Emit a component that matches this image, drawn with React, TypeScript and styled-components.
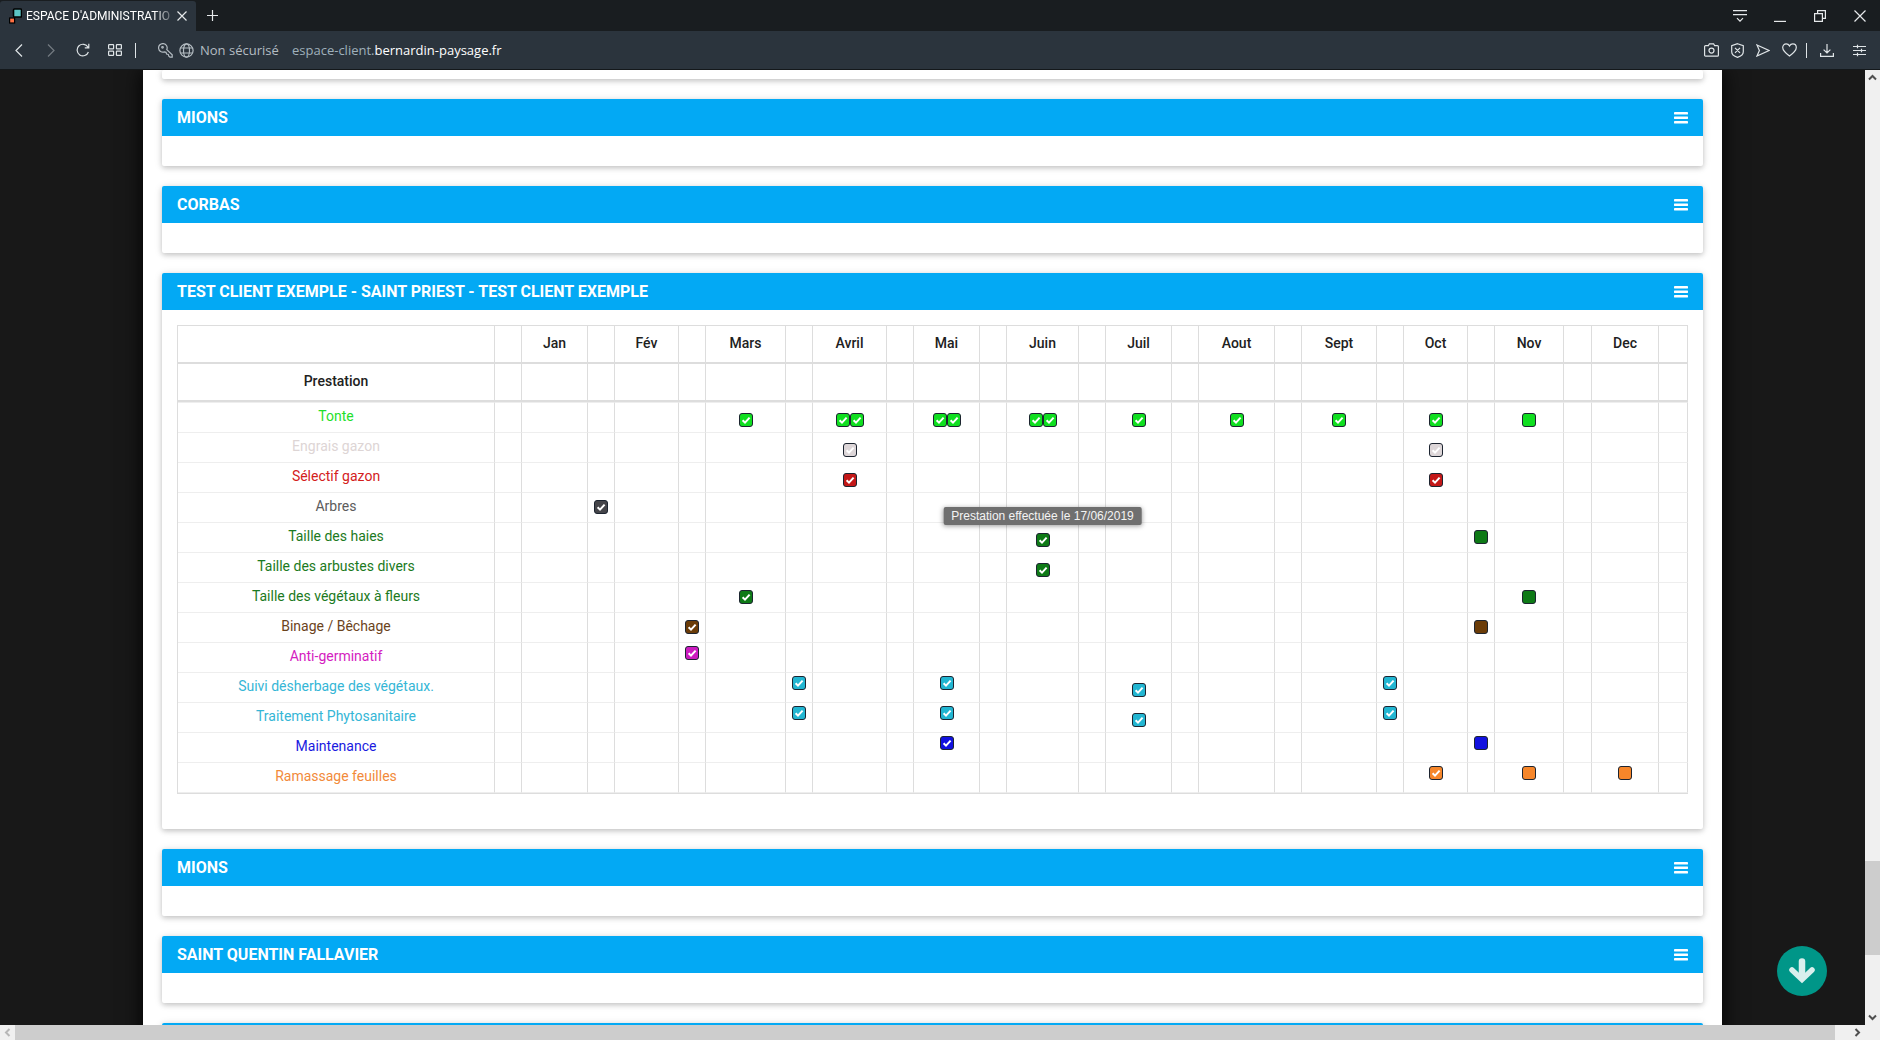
import React, { useState } from "react";
import styled, { createGlobalStyle } from "styled-components";

const Global = createGlobalStyle`
  *, *::before, *::after { box-sizing: border-box; }
  html, body { margin: 0; }
  body { background: #181818; overflow: hidden; font-family: Roboto, "Liberation Sans", sans-serif; }
  button { font: inherit; color: inherit; background: none; border: 0; padding: 0; cursor: pointer; }
`;

/* ---------- Browser window ---------- */

const Window = styled.div`
  display: flex;
  flex-direction: column;
  height: 100vh;
`;

const TitleBar = styled.header`
  display: flex;
  height: 31px;
  flex: none;
  background: #191d20;
  color: #e6e9eb;
`;

const Tab = styled.div`
  display: flex;
  align-items: center;
  width: 196px;
  margin-top: 1px;
  padding: 0 8px 0 9px;
  gap: 4px;
  background: #2b343d;
  border-radius: 3px 3px 0 0;
`;

const TabTitle = styled.span`
  flex: 1;
  white-space: nowrap;
  font-size: 12px;
  line-height: 16px;
  color: #fff;
  mask-image: linear-gradient(to right, #000 88%, rgba(0, 0, 0, 0.2));
`;

const IconButton = styled.button<{ $w: number; $dim?: boolean }>`
  display: flex;
  align-items: center;
  justify-content: center;
  flex: none;
  width: ${(p) => p.$w}px;
  height: 100%;
  opacity: ${(p) => (p.$dim ? 0.4 : 1)};
`;

const Spacer = styled.div`
  flex: 1;
`;

const AddressBar = styled.nav`
  display: flex;
  align-items: center;
  flex: none;
  height: 39px;
  padding: 0 5px 0 3px;
  background: #2b343d;
  border-bottom: 1px solid #14181b;
  color: #dfe4e7;
  font-family: "Open Sans", "Noto Sans", sans-serif;
  font-size: 13px;
  line-height: 18px;
`;

const Divider = styled.span`
  width: 1px;
  height: 15px;
  margin: 0 4px;
  background: #dfe4e7;
`;

const Site = styled.div`
  display: flex;
  align-items: center;
  gap: 6px;
  width: 134px;
  margin-left: 18px;
  color: #b4bcc2;
  white-space: nowrap;
`;

const Url = styled.button`
  color: #9fb0bb;
  white-space: nowrap;
  b { font-weight: 500; color: #fff; }
`;

const Line = styled.svg`
  display: block;
  flex: none;
  fill: none;
  stroke: currentColor;
  stroke-width: 1.2;
`;

/* ---------- Viewport and scroll bars ---------- */

const Viewport = styled.div`
  display: grid;
  grid-template-columns: minmax(0, 1fr) 15px;
  grid-template-rows: minmax(0, 1fr) 15px;
  flex: 1;
  min-height: 0;
`;

const Scene = styled.div`
  position: relative;
  overflow: hidden;
`;

const Track = styled.div<{ $vertical?: boolean }>`
  display: flex;
  flex-direction: ${(p) => (p.$vertical ? "column" : "row")};
  grid-column: ${(p) => (p.$vertical ? "auto" : "1 / -1")};
  background: #f0f0f0;
  color: #505050;
`;

const TrackButton = styled.button<{ $faint?: boolean }>`
  display: flex;
  align-items: center;
  justify-content: center;
  flex: none;
  width: 15px;
  height: 15px;
  opacity: ${(p) => (p.$faint ? 0.35 : 1)};
`;

const Thumb = styled.div<{ $grow: number }>`
  flex: ${(p) => p.$grow} 0 0;
  background: #cdcdcd;
`;

const Gap = styled.div<{ $grow: number }>`
  flex: ${(p) => p.$grow} 0 0;
`;

/* ---------- Site page ---------- */

const Page = styled.main`
  display: flex;
  flex-direction: column;
  gap: 20px;
  min-height: 100%;
  margin: 0 143px;
  padding: 0 19px;
  background: #fff;
  box-shadow: 0 0 20px #000;
`;

const Card = styled.section`
  flex: none;
  border-radius: 2px;
  background: #fff;
  box-shadow: 0 2px 5px rgba(0, 0, 0, 0.16), 0 1px 8px rgba(0, 0, 0, 0.12);
`;

const CardHead = styled.div`
  display: flex;
  align-items: center;
  justify-content: space-between;
  height: 37px;
  padding: 0 15px;
  border-radius: 2px 2px 0 0;
  background: #03a9f4;
  color: #fff;
`;

const CardTitle = styled.h2`
  margin: 0;
  font-size: 16px;
  line-height: 20px;
  font-weight: 700;
`;

const CardMenu = styled.button`
  display: flex;
`;

const CardBody = styled.div<{ $size: "cut" | "empty" | "full" }>`
  padding: ${(p) => (p.$size === "full" ? "15px 15px 35px" : "0")};
  height: ${(p) => ({ cut: "9px", empty: "30px", full: "auto" })[p.$size]};
`;

const Schedule = styled.table`
  width: 100%;
  table-layout: fixed;
  border-collapse: separate;
  border-spacing: 0;
  border: solid #ddd;
  border-width: 1px 0 1px 1px;
  font-size: 14px;
  line-height: 20px;

  tbody tr:first-child > * { border-top: 1px solid #eee; height: 31px; }
`;

const Head = styled.th`
  height: 38px;
  padding: 0 0 2px;
  border-right: 1px solid #ddd;
  border-bottom: 2px solid #ddd;
  font-weight: 500;
  color: #212121;
`;

const Service = styled.th<{ $color: string }>`
  height: 30px;
  padding: 0 0 3px;
  border-right: 1px solid #ddd;
  border-bottom: 1px solid #eee;
  font-weight: 400;
  color: ${(p) => p.$color};
`;

const Cell = styled.td<{ $align: Align }>`
  height: 30px;
  padding: 3px 0 5px;
  border-right: 1px solid #ddd;
  border-bottom: 1px solid #eee;
  vertical-align: ${(p) => p.$align};
  line-height: 0;
`;

const Marks = styled.div`
  position: relative;
  display: flex;
  justify-content: center;
`;

const tick =
  "url(\"data:image/svg+xml,%3Csvg xmlns='http://www.w3.org/2000/svg' viewBox='0 0 12 12'%3E%3Cpath d='M2.6 6.2 5 8.6 9.6 3.6' fill='none' stroke='white' stroke-width='2'/%3E%3C/svg%3E\")";

const Mark = styled.input<{ $color: string }>`
  appearance: none;
  width: 14px;
  height: 14px;
  margin: 0;
  border: 1px solid #1c2430;
  border-radius: 3px;
  background: ${(p) => p.$color} center / 12px 12px no-repeat;
  &:checked { background-image: ${tick}; }
`;

const Tooltip = styled.div`
  position: absolute;
  left: 50%;
  bottom: calc(100% + 8px);
  z-index: 1;
  transform: translateX(-50%);
  padding: 1px 8px;
  border-radius: 2px;
  background: #6f6f6f;
  box-shadow: 0 1px 5px rgba(0, 0, 0, 0.4);
  color: #f4f4f4;
  font-family: "Liberation Sans", Arial, sans-serif;
  font-size: 12px;
  line-height: 16px;
  white-space: nowrap;
`;

const DownButton = styled.button`
  position: absolute;
  right: 38px;
  bottom: 29px;
  display: flex;
  align-items: center;
  justify-content: center;
  width: 50px;
  height: 50px;
  border-radius: 50%;
  background: #009688;
  color: #d9efed;
`;

/* ---------- Data ---------- */

type Align = "top" | "middle" | "bottom";

const months = ["Jan", "Fév", "Mars", "Avril", "Mai", "Juin", "Juil", "Aout", "Sept", "Oct", "Nov", "Dec"];

// The first column, then a narrow column before each month and one after the last.
const columns = [317, 27, 66, 27, 64, 27, 80, 27, 74, 27, 66, 27, 72, 27, 66, 27, 76, 27, 75, 27, 64, 27, 69, 28, 67, 29];
const slots = columns.length - 1;

// Month m sits in slot 2m - 1; the half-month that follows it is slot 2m.
interface Row {
  name: string;
  text: string;
  fill: string;
  align: Align;
  done?: number[];
  twice?: number[];
  planned?: number[];
  low?: number[];
  tip?: { slot: number; text: string };
}

const rows: Row[] = [
  { name: "Tonte", text: "#1fdf2b", fill: "#10df20", align: "bottom", done: [5, 7, 9, 11, 13, 15, 17, 19], twice: [7, 9, 11], planned: [21] },
  { name: "Engrais gazon", text: "#ddd5d5", fill: "#ddd6d8", align: "bottom", done: [7, 19] },
  { name: "Sélectif gazon", text: "#d3201c", fill: "#c41818", align: "bottom", done: [7, 19] },
  { name: "Arbres", text: "#5c5c5c", fill: "#45454a", align: "middle", done: [2] },
  { name: "Taille des haies", text: "#1b7a22", fill: "#0e7a16", align: "middle", done: [11], planned: [20], low: [11], tip: { slot: 11, text: "Prestation effectuée le 17/06/2019" } },
  { name: "Taille des arbustes divers", text: "#1b7a22", fill: "#0e7a16", align: "middle", done: [11], low: [11] },
  { name: "Taille des végétaux à fleurs", text: "#1b7a22", fill: "#0e7a16", align: "middle", done: [5], planned: [21] },
  { name: "Binage / Bêchage", text: "#6b431c", fill: "#6b3c08", align: "middle", done: [4], planned: [20] },
  { name: "Anti-germinatif", text: "#d41cc0", fill: "#cc1cc0", align: "top", done: [4] },
  { name: "Suivi désherbage des végétaux.", text: "#35b6d6", fill: "#22b6d2", align: "top", done: [6, 9, 13, 18], low: [13] },
  { name: "Traitement Phytosanitaire", text: "#35b6d6", fill: "#22b6d2", align: "top", done: [6, 9, 13, 18], low: [13] },
  { name: "Maintenance", text: "#1a1ae0", fill: "#1212e0", align: "top", done: [9], planned: [20] },
  { name: "Ramassage feuilles", text: "#f28a3a", fill: "#f6862a", align: "top", done: [19], planned: [21, 23] },
];

const slotName = (slot: number) =>
  slot % 2 ? months[(slot - 1) / 2] : `après ${months[slot / 2 - 1] ?? "Dec"}`;

/* ---------- Parts ---------- */

const Bars = () => (
  <svg width="14" height="13" viewBox="0 0 14 13" fill="currentColor">
    <rect y="1" width="14" height="2.500" rx="0.400" />
    <rect y="5.500" width="14" height="2.500" rx="0.400" />
    <rect y="10" width="14" height="2.500" rx="0.400" />
  </svg>
);

function Panel({ title, children }: { title: string; children?: React.ReactNode }) {
  return (
    <Card>
      <CardHead>
        <CardTitle>{title}</CardTitle>
        <CardMenu aria-label={`Menu ${title}`}>
          <Bars />
        </CardMenu>
      </CardHead>
      <CardBody $size={children ? "full" : "empty"}>{children}</CardBody>
    </Card>
  );
}

function Box({ label, color, start }: { label: string; color: string; start: boolean }) {
  const [on, setOn] = useState(start);
  return <Mark type="checkbox" aria-label={label} $color={color} checked={on} onChange={() => setOn(!on)} />;
}

function Slot({ row, slot }: { row: Row; slot: number }) {
  const done = row.done?.includes(slot) ?? false;
  const planned = row.planned?.includes(slot) ?? false;
  const label = `${row.name}, ${slotName(slot)}`;
  return (
    <Cell $align={row.low?.includes(slot) ? "bottom" : row.align}>
      {(done || planned) && (
        <Marks>
          <Box label={label} color={row.fill} start={done} />
          {row.twice?.includes(slot) && <Box label={`${label} (2)`} color={row.fill} start />}
          {row.tip?.slot === slot && <Tooltip role="tooltip">{row.tip.text}</Tooltip>}
        </Marks>
      )}
    </Cell>
  );
}

function Planning() {
  const range = Array.from({ length: slots }, (_, i) => i);
  return (
    <Schedule>
      <colgroup>
        {columns.map((w, i) => (
          <col key={i} width={w} />
        ))}
      </colgroup>
      <thead>
        <tr>
          <Head />
          {range.map((i) => (
            <Head key={i}>{i % 2 ? months[(i - 1) / 2] : null}</Head>
          ))}
        </tr>
        <tr>
          <Head>Prestation</Head>
          {range.map((i) => (
            <Head key={i} />
          ))}
        </tr>
      </thead>
      <tbody>
        {rows.map((row) => (
          <tr key={row.name}>
            <Service scope="row" $color={row.text}>{row.name}</Service>
            {range.map((i) => (
              <Slot key={i} row={row} slot={i} />
            ))}
          </tr>
        ))}
      </tbody>
    </Schedule>
  );
}

const chevrons = {
  up: "M1 6.5 4.5 3 8 6.5",
  down: "M1 2.5 4.5 6 8 2.5",
  left: "M6.5 1 3 4.5 6.5 8",
  right: "M2.5 1 6 4.5 2.5 8",
};

const Arrow = ({ to, faint }: { to: keyof typeof chevrons; faint?: boolean }) => (
  <TrackButton aria-label={`Défiler ${to}`} $faint={faint}>
    <svg width="9" height="9" viewBox="0 0 9 9" fill="none" stroke="currentColor" strokeWidth="2">
      <path d={chevrons[to]} />
    </svg>
  </TrackButton>
);

function Chrome() {
  return (
    <>
      <TitleBar>
        <Tab>
          <svg width="13" height="16" viewBox="0 0 13 16">
            <rect x="4.5" y="1" width="8" height="8" rx="1" fill="#5cc4c4" stroke="#000" strokeWidth="1.6" />
            <rect x="0.6" y="10" width="5" height="5" fill="#ff7043" stroke="#000" strokeWidth="1.2" />
          </svg>
          <TabTitle>ESPACE D'ADMINISTRATIO</TabTitle>
          <IconButton $w={12} aria-label="Fermer l'onglet">
            <Line width="10" height="10" viewBox="0 0 10 10"><path d="M.5.5l9 9M9.5.5l-9 9" /></Line>
          </IconButton>
        </Tab>
        <IconButton $w={32} aria-label="Nouvel onglet">
          <Line width="11" height="11" viewBox="0 0 11 11"><path d="M5.5 0v11M0 5.5h11" /></Line>
        </IconButton>
        <Spacer />
        <IconButton $w={40} aria-label="Menu des onglets">
          <Line width="14" height="12" viewBox="0 0 14 12"><path d="M0 .6h14M0 4.6h14M4 8.2l3 3 3-3" /></Line>
        </IconButton>
        <IconButton $w={40} aria-label="Réduire">
          <Line width="12" height="12" viewBox="0 0 12 12"><path d="M0 11.4h12" /></Line>
        </IconButton>
        <IconButton $w={40} aria-label="Restaurer">
          <Line width="12" height="12" viewBox="0 0 12 12"><path d="M.6 3.6h7.8v7.8H.6zM3.6 3.6v-3h7.8v7.8h-3" /></Line>
        </IconButton>
        <IconButton $w={40} aria-label="Fermer">
          <Line width="12" height="12" viewBox="0 0 12 12"><path d="M.5.5l11 11M11.5.5l-11 11" /></Line>
        </IconButton>
      </TitleBar>
      <AddressBar>
        <IconButton $w={32} aria-label="Précédent">
          <Line width="8" height="13" viewBox="0 0 8 13"><path d="M7 .5l-6 6 6 6" /></Line>
        </IconButton>
        <IconButton $w={32} $dim aria-label="Suivant">
          <Line width="8" height="13" viewBox="0 0 8 13"><path d="M1 .5l6 6-6 6" /></Line>
        </IconButton>
        <IconButton $w={32} aria-label="Recharger">
          <Line width="14" height="14" viewBox="0 0 14 14"><path d="M12.4 9A5.8 5.8 0 1 1 12 4.2M12.8.8v4H8.8" /></Line>
        </IconButton>
        <IconButton $w={32} aria-label="Accès rapide">
          <Line width="14" height="12" viewBox="0 0 14 12">
            <rect x=".6" y=".6" width="5" height="4.2" rx=".6" />
            <rect x="8.4" y=".6" width="5" height="4.2" rx=".6" />
            <rect x=".6" y="7.2" width="5" height="4.2" rx=".6" />
            <rect x="8.4" y="7.2" width="5" height="4.2" rx=".6" />
          </Line>
        </IconButton>
        <Divider />
        <Site>
          <Line width="15" height="15" viewBox="0 0 15 15">
            <path d="M8.800 6.600A4.300 4.300 0 1 0 6.400 8.900l1.600.4.600 1.700 1.700.4.500 1.700 1.200 1h2.200v-2.300z" />
            <circle cx="4.500" cy="4.300" r=".8" />
          </Line>
          <Line width="15" height="15" viewBox="0 0 15 15">
            <circle cx="7.5" cy="7.5" r="6.6" />
            <ellipse cx="7.5" cy="7.5" rx="3" ry="6.6" />
            <path d="M1.6 5h11.8M1.6 10h11.8" />
          </Line>
          <span>Non sécurisé</span>
        </Site>
        <Url>espace-client.<b>bernardin-paysage.fr</b></Url>
        <Spacer />
        <IconButton $w={26} aria-label="Capture">
          <Line width="15" height="14" viewBox="0 0 15 14">
            <path d="M1.6 2.6h2.8l1-1.8h4.2l1 1.8h2.8a1 1 0 0 1 1 1v8.6a1 1 0 0 1-1 1H1.6a1 1 0 0 1-1-1V3.6a1 1 0 0 1 1-1z" />
            <circle cx="7.5" cy="7.6" r="2.5" />
          </Line>
        </IconButton>
        <IconButton $w={26} aria-label="Protection">
          <Line width="13" height="15" viewBox="0 0 13 15">
            <path d="M6.5.7l5.8 1.9v6.2c0 2.8-2.6 4.6-5.8 5.6-3.2-1-5.8-2.8-5.8-5.6V2.6zM4 4.8l5 5M9 4.8l-5 5" />
          </Line>
        </IconButton>
        <IconButton $w={26} aria-label="Envoyer">
          <Line width="14" height="13" viewBox="0 0 14 13"><path d="M1 1l12 5.5L1 12l2.4-5.5z" /></Line>
        </IconButton>
        <IconButton $w={26} aria-label="Favoris">
          <Line width="15" height="14" viewBox="0 0 15 14">
            <path d="M7.5 13.1C3.8 10.4.7 7.8.7 4.6.7 2.3 2.3.8 4.2.8c1.4 0 2.6.8 3.3 2.1C8.200 1.600 9.400.8 10.800.8c1.900 0 3.500 1.500 3.500 3.800 0 3.200-3.100 5.800-6.800 8.500z" />
          </Line>
        </IconButton>
        <Divider />
        <IconButton $w={32} aria-label="Téléchargements">
          <Line width="14" height="13" viewBox="0 0 14 13"><path d="M7 0v9M3.600 5.600L7 9l3.400-3.400M.6 9v3.400h12.800V9" /></Line>
        </IconButton>
        <IconButton $w={32} aria-label="Réglages">
          <Line width="13" height="13" viewBox="0 0 13 13"><path d="M0 2.500h13M0 6.500h13M0 10.500h13M4.500.8v3.400M8.500 4.800v3.400M4.500 8.800v3.400" /></Line>
        </IconButton>
      </AddressBar>
    </>
  );
}

export default function App() {
  return (
    <Window>
      <Global />
      <Chrome />
      <Viewport>
        <Scene>
          <Page>
            <Card>
              <CardBody $size="cut" />
            </Card>
            <Panel title="MIONS" />
            <Panel title="CORBAS" />
            <Panel title="TEST CLIENT EXEMPLE - SAINT PRIEST - TEST CLIENT EXEMPLE">
              <Planning />
            </Panel>
            <Panel title="MIONS" />
            <Panel title="SAINT QUENTIN FALLAVIER" />
            <Card>
              <CardHead />
              <CardBody $size="empty" />
            </Card>
          </Page>
          <DownButton aria-label="Descendre">
            <svg width="28" height="26" viewBox="0 0 28 26" fill="none" stroke="currentColor" strokeLinecap="round">
              <path d="M14 3.500v16" strokeWidth="6.500" />
              <path d="M4 12l10 9.500L24 12" strokeWidth="5.500" />
            </svg>
          </DownButton>
        </Scene>
        <Track $vertical>
          <Arrow to="up" />
          <Gap $grow={776} />
          <Thumb $grow={94} />
          <Gap $grow={55} />
          <Arrow to="down" />
        </Track>
        <Track>
          <Arrow to="left" faint />
          <Thumb $grow={1820} />
          <Gap $grow={15} />
          <Arrow to="right" />
          <TrackButton as="span" />
        </Track>
      </Viewport>
    </Window>
  );
}
